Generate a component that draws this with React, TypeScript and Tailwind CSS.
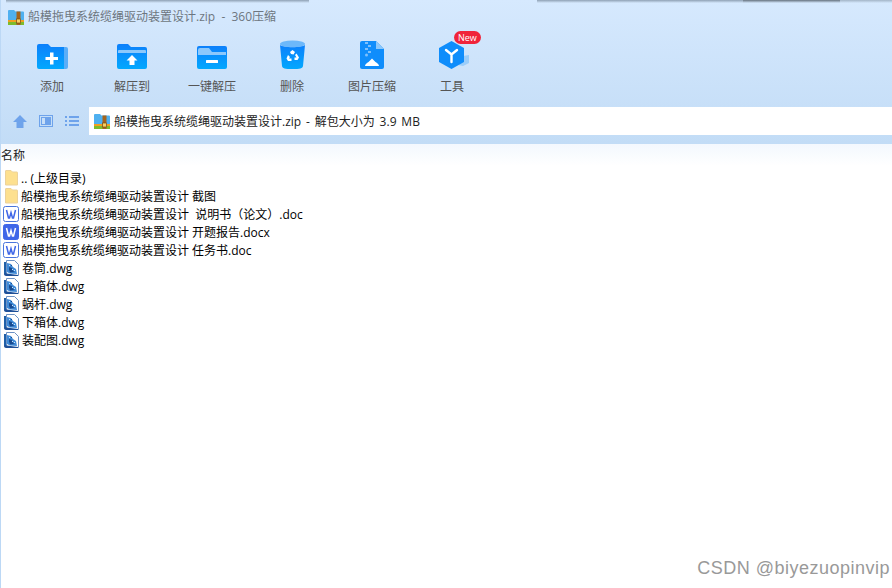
const font = "[font-family:'Open_Sans','Noto_Sans_CJK_SC',sans-serif]";

const ZipIcon = ({ className = "" }: { className?: string }) => (
  <svg className={className} width="16" height="15" viewBox="0 0 16 15">
    <path d="M0 1a1 1 0 0 1 1-1h5l1.500 1.500H15a1 1 0 0 1 1 1V10H0z" fill="#4fb0f0" />
    <rect x="0" y="10" width="16" height="2.500" fill="#f0a020" />
    <rect x="0" y="12" width="16" height="3" fill="#7dbb2c" />
    <rect x="8.500" y="1.500" width="4" height="13.500" fill="#a5641d" />
    <rect x="8.500" y="9" width="4" height="4" fill="#f6cf63" stroke="#7a4a10" strokeWidth=".7" />
  </svg>
);

const BlueGrad = ({ id }: { id: string }) => (
  <defs>
    <linearGradient id={id} x1="0" y1="0" x2="0" y2="1">
      <stop offset="0" stopColor="#0d80fb" />
      <stop offset="1" stopColor="#02a8fe" />
    </linearGradient>
  </defs>
);

const AddIcon = () => (
  <svg width="31" height="25" viewBox="0 0 31 25">
    <BlueGrad id="g1" />
    <path d="M26 3h3a2 2 0 0 1 2 2v18a2 2 0 0 1-2 2h-3z" fill="#5aaef8" />
    <path d="M0 2a2 2 0 0 1 2-2h9l3 3h13v22H2a2 2 0 0 1-2-2z" fill="url(#g1)" />
    <path d="M13 8.500h3.500V13H21v3h-4.500v4.500H13V16H8.500v-3H13z" fill="#fff" />
  </svg>
);

const ExtractToIcon = () => (
  <svg width="30" height="25" viewBox="0 0 30 25">
    <BlueGrad id="g2" />
    <path d="M0 2a2 2 0 0 1 2-2h9l3 3h14a2 2 0 0 1 2 2v18a2 2 0 0 1-2 2H2a2 2 0 0 1-2-2z" fill="url(#g2)" />
    <path d="M2 6h26a1 1 0 0 1 1 1v2H1V7a1 1 0 0 1 1-1z" fill="#8cc8fb" />
    <path d="M15 11l5.500 5.500H17.500V21h-5v-4.500H9.500z" fill="#fff" />
  </svg>
);

const OneClickIcon = () => (
  <svg width="30" height="23" viewBox="0 0 30 23">
    <BlueGrad id="g3" />
    <path d="M0 2a2 2 0 0 1 2-2h26a2 2 0 0 1 2 2v19a2 2 0 0 1-2 2H2a2 2 0 0 1-2-2z" fill="url(#g3)" />
    <path d="M3 2h9l3 4h14v3H1V4a2 2 0 0 1 2-2z" fill="#8cc8fb" />
    <rect x="9" y="14" width="12" height="3" rx=".5" fill="#fff" />
  </svg>
);

const TrashIcon = () => (
  <svg width="25" height="29" viewBox="0 0 25 29">
    <BlueGrad id="g4" />
    <ellipse cx="12.500" cy="4" rx="12.500" ry="3.500" fill="#6db8fa" />
    <path d="M0 5c3 3 22 3 25 0l-2 21c-.3 2.500-3 3-10.500 3S2.300 28.500 2 26z" fill="url(#g4)" />
    <path d="M10 12l2.500-2 2.500 2-1.500 2.500-2.500-.5zM16.500 13.500l2.500 4-1.500 2.500h-3v-2.500h2l-1.500-2.500zM8 15l2 2-1 1.500h2.500V21H8l-1.500-2.500z" fill="#fff" />
  </svg>
);

const ImageZipIcon = () => (
  <svg width="24" height="28" viewBox="0 0 24 28">
    <path d="M2 0h14l8 8v18a2 2 0 0 1-2 2H2a2 2 0 0 1-2-2V2a2 2 0 0 1 2-2z" fill="#0f8dfb" />
    <path d="M16 0l8 8h-8z" fill="#8cc8fb" />
    <path d="M5 1h3v2H5zM8 4h3v2H8zM5 7h3v2H5zM8 10h3v2H8z" fill="#7fc0fb" />
    <circle cx="6.500" cy="14" r="1.500" fill="#7fc0fb" />
    <path d="M5 25c0-2 2-3 3.500-4l3.500-3.500 3.500 3.500c1.500 1 3.500 2 3.500 4z" fill="#fff" />
  </svg>
);

const ToolsIcon = () => (
  <svg width="30" height="28" viewBox="0 0 30 28">
    <path d="M24 15l6-1v8l-6 3-5-1z" fill="#9bcdf9" />
    <path d="M12.500 0L25 7v14l-12.500 7L0 21V7z" fill="#0f8dfb" />
    <path d="M7 9l5.500 4.500L18 9M12.500 13.500V21" fill="none" stroke="#fff" strokeWidth="2.400" strokeLinecap="round" />
  </svg>
);

const FolderFile = () => (
  <svg className="ml-[4px] mr-[3px]" width="13" height="16" viewBox="0 0 13 16">
    <path d="M.5 1a.5.5 0 0 1 .5-.5h5l1.500 1.500h4.500a.5.5 0 0 1 .5.5v12.500H.5z" fill="#fde08f" stroke="#ecd29a" />
  </svg>
);

const WordFile = ({ solid = false }: { solid?: boolean }) => (
  <svg className="ml-[2px] mr-[2px]" width="16" height="16" viewBox="0 0 16 16">
    <rect x=".5" y=".5" width="15" height="15" rx="2" fill={solid ? "#3f67e8" : "#fff"} stroke={solid ? "#3f67e8" : "#4a76dc"} />
    <path d="M3.500 4l2 8h1l1.500-5.500L9.500 12h1l2-8" fill="none" stroke={solid ? "#fff" : "#3f67e8"} strokeWidth="1.500" />
  </svg>
);

const DwgFile = () => (
  <svg className="ml-[3px] mr-[3px]" width="15" height="16" viewBox="0 0 15 16">
    <path d="M2.500.5h8l4 4v11h-12z" fill="#fff" stroke="#6d92c4" />
    <path d="M0 2h2v12H0z" fill="#1f5fa8" />
    <path d="M0 14c1-1 2-1 3-.5L14 15v1H2c-1 0-2-1-2-2z" fill="#1d4f98" />
    <path d="M3 3l4 1 2 3 3 2 1 5-7-.5L3 12z" fill="#3f8bd8" />
    <path d="M5 7l3 1 1 3 2 1-5 .5-1-3zM7 5h1v1H7z" fill="#174a90" />
    <path d="M8 9h1v1H8zM5 5h1v1H5zM10 10h1v1h-1z" fill="#cfe4f8" />
  </svg>
);

const tools = [
  { label: "添加", icon: <AddIcon />, shift: "" },
  { label: "解压到", icon: <ExtractToIcon />, shift: "" },
  { label: "一键解压", icon: <OneClickIcon />, shift: "" },
  { label: "删除", icon: <TrashIcon />, shift: "" },
  { label: "图片压缩", icon: <ImageZipIcon />, shift: "" },
  { label: "工具", icon: <ToolsIcon />, shift: "ml-1", badge: true },
];

const files = [
  { name: ".. (上级目录)", icon: <FolderFile /> },
  { name: "船模拖曳系统缆绳驱动装置设计 截图", icon: <FolderFile /> },
  { name: "船模拖曳系统缆绳驱动装置设计  说明书（论文）.doc", icon: <WordFile /> },
  { name: "船模拖曳系统缆绳驱动装置设计 开题报告.docx", icon: <WordFile solid /> },
  { name: "船模拖曳系统缆绳驱动装置设计 任务书.doc", icon: <WordFile /> },
  { name: "卷筒.dwg", icon: <DwgFile /> },
  { name: "上箱体.dwg", icon: <DwgFile /> },
  { name: "蜗杆.dwg", icon: <DwgFile /> },
  { name: "下箱体.dwg", icon: <DwgFile /> },
  { name: "装配图.dwg", icon: <DwgFile /> },
];

export default function App() {
  return (
    <div className={`${font} relative flex h-[588px] w-[892px] flex-col overflow-hidden border-l border-[#bcd8f5] bg-white text-xs`}>
      {/* top part with the blue gradient */}
      <div className="flex h-[144px] -ml-px flex-col bg-gradient-to-b from-[#d6e9fe] to-[#c2dcf6]">
        {/* shadow strip left by the windows above */}
        <div className="flex h-[3px]">
          <div className="ml-[6px] w-[303px] bg-gradient-to-b from-[#8fa1b4] to-transparent" />
          <div className="ml-[228px] w-[206px] bg-gradient-to-b from-[#8fa1b4] to-transparent" />
          <div className="w-[97px] bg-gradient-to-b from-[#66727f] to-transparent" />
          <div className="flex-1 bg-gradient-to-b from-[#a3b5c7] to-transparent" />
        </div>
        <div className="flex h-[30px] items-center pb-[2px] pl-2 text-[#6d7680]">
          <ZipIcon className="mr-1" />
          <span className="whitespace-pre">船模拖曳系统缆绳驱动装置设计.zip  -  360压缩</span>
        </div>
        <div className="flex h-[74px] pl-3">
          {tools.map((t) => (
            <div key={t.label} className="relative flex w-20 flex-col items-center text-[#555]">
              <div className={`flex h-[36px] items-end ${t.shift}`}>{t.icon}</div>
              {t.badge && (
                <span className="absolute left-[42px] top-[-2px] rounded-full bg-[#f0233a] px-[4px] text-[9px] leading-[13px] text-white">
                  New
                </span>
              )}
              <span className="mt-[9px] leading-[17px]">{t.label}</span>
            </div>
          ))}
        </div>
        <div className="flex h-[28px] items-center pl-[13px]">
          <div className="flex w-[76px] items-center gap-[12px]">
            <svg width="14" height="13" viewBox="0 0 14 13">
              <path d="M7 0l7 7h-3.500v6h-7V7H0z" fill="#6ea3eb" />
            </svg>
            <svg width="14" height="12" viewBox="0 0 14 12">
              <rect x=".5" y=".5" width="13" height="11" fill="none" stroke="#6ea3eb" />
              <rect x="2" y="2" width="10" height="8" fill="#6ea3eb" />
              <rect x="3" y="3" width="3" height="6" fill="#c8dff8" />
            </svg>
            <svg width="14" height="12" viewBox="0 0 14 12">
              <path d="M0 1h2v2H0zM4 1h10v2H4zM0 5h2v2H0zM4 5h10v2H4zM0 9h2v2H0zM4 9h10v2H4z" fill="#6ea3eb" />
            </svg>
          </div>
          <div className="flex h-[28px] flex-1 items-center bg-white pl-[5px] text-[#222]">
            <ZipIcon className="mr-1" />
            <span className="pt-[2px] [word-spacing:1.75px]">船模拖曳系统缆绳驱动装置设计.zip - 解包大小为 3.9 MB</span>
          </div>
        </div>
      </div>

      {/* column header */}
      <div className="flex h-[22px] -ml-px items-center bg-gradient-to-b from-[#f3f8fe] to-white pl-px pt-[2px] text-[#222]">
        名称
      </div>

      {/* file list */}
      <ul className="mt-[3px] flex flex-col text-black">
        {files.map((f) => (
          <li key={f.name} className="flex h-[18px] items-center whitespace-pre">
            {f.icon}
            <span className="pt-[2px]">{f.name}</span>
          </li>
        ))}
      </ul>

      <span className="absolute bottom-[8px] right-[2px] [font-family:'Liberation_Sans',sans-serif] text-lg leading-[24px] tracking-[.5px] text-[#999]">
        CSDN @biyezuopinvip
      </span>
    </div>
  );
}
